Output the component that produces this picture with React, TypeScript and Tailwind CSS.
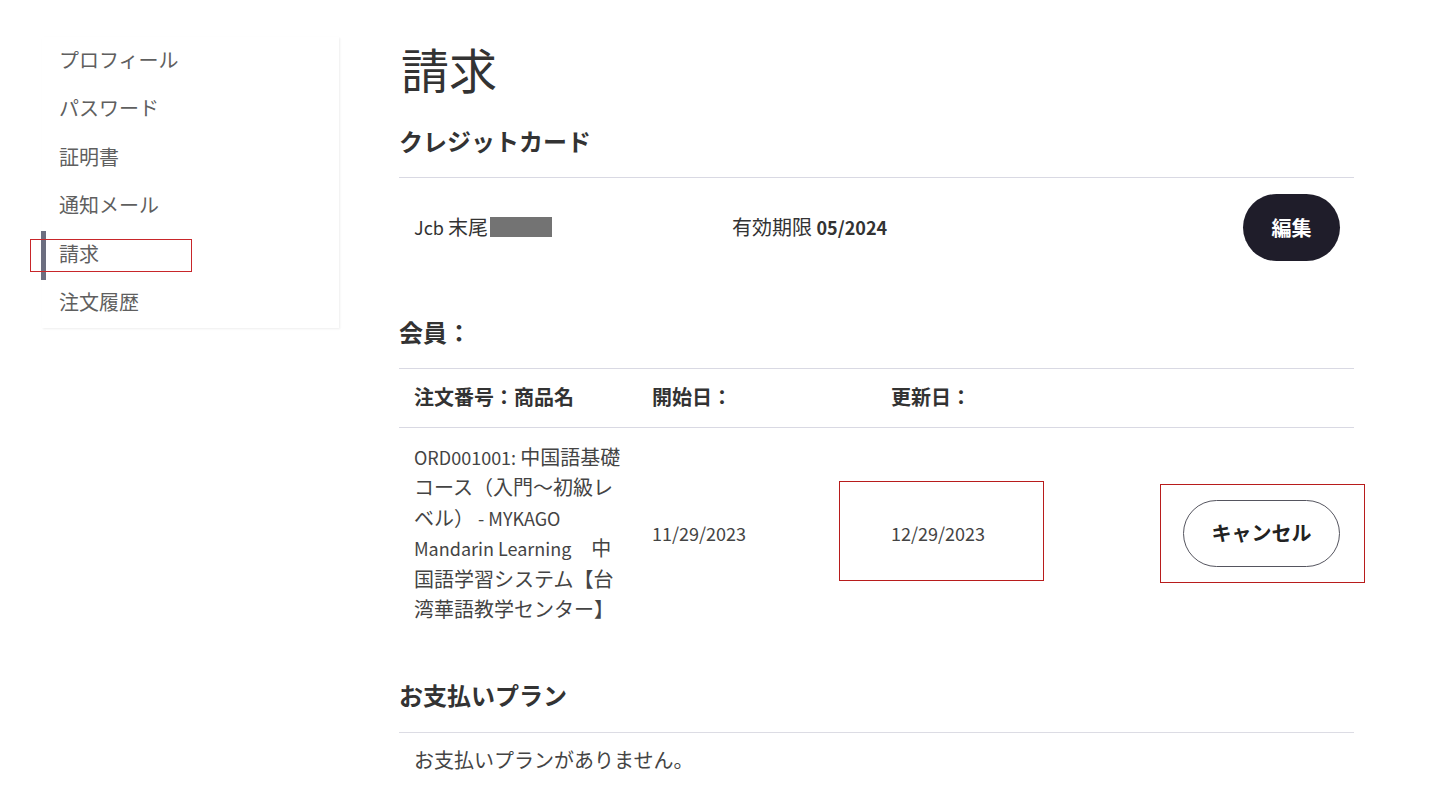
import React from "react";

const font = { fontFamily: '"Noto Sans CJK JP", "Noto Sans", sans-serif' };

const navItems = ["プロフィール", "パスワード", "証明書", "通知メール", "請求", "注文履歴"];

function L({ children }: { children: React.ReactNode }) {
  return <span className="text-[18px]">{children}</span>;
}

export default function App() {
  return (
    <div
      className="min-h-[810px] w-[1440px] bg-white pt-[37px] pl-[42px] flex items-start gap-[60px] text-[#333]"
      style={font}
    >
      {/* Sidebar */}
      <aside className="relative w-[297px] bg-white shadow-[1px_1px_2px_rgba(0,0,0,0.07)]">
        {navItems.map((item) => {
          const active = item === "請求";
          return (
            <div key={item} className="relative h-[48.5px] flex items-center pl-[17px] pb-[3px]">
              {active && <div className="absolute left-[-1px] top-0 h-full w-[5px] bg-[#6c6e80]" />}
              <span className="text-[20px] leading-none text-[#5f5f5f]">{item}</span>
            </div>
          );
        })}
        <div className="absolute left-[-12px] top-[202px] w-[162px] h-[33px] border border-[#c8262a]" />
      </aside>

      {/* Main */}
      <main className="w-[955px]">
        <h1 className="text-[48px] leading-[63px] font-normal text-[#333] pl-[2px]">請求</h1>

        <h2 className="mt-[24px] text-[24px] leading-[33px] font-bold text-[#333] pb-[20px] border-b border-[#d9d9e3]">
          クレジットカード
        </h2>
        <div className="flex items-center py-[16px] pl-[15px] pr-[14px]">
          <div className="w-[318px] flex items-center text-[20px] text-[#333] -translate-y-[1px]">
            <span>
              <L>Jcb </L>末尾
            </span>
            <span className="ml-[2px] inline-block w-[62px] h-[20px] bg-[#737373]" />
          </div>
          <div className="flex-1 text-[20px] text-[#333] -translate-y-[1px]">
            有効期限 <span className="font-bold text-[18px]">05/2024</span>
          </div>
          <button className="w-[97px] h-[67px] rounded-full bg-[#1f1d2a] text-white text-[20px] font-bold">
            編集
          </button>
        </div>

        <h2 className="mt-[40px] text-[24px] leading-[30px] font-bold text-[#333] pb-[21px] border-b border-[#d9d9e3]">
          会員：
        </h2>
        <div className="grid grid-cols-[238px_239px_1fr_auto] h-[59px] items-center border-b border-[#d9d9e3] text-[20px] font-bold text-[#333]">
          <div className="pl-[15px] -translate-y-[1px]">注文番号：商品名</div>
          <div className="pl-[15px] -translate-y-[1px]">開始日：</div>
          <div className="pl-[15px] -translate-y-[1px]">更新日：</div>
          <div />
        </div>
        <div className="relative grid grid-cols-[238px_239px_1fr_auto] items-center py-[14px] text-[20px] text-[#444]">
          <div className="pl-[15px] pr-[11px] leading-[30.4px]">
            <L>ORD001001: </L>中国語基礎コース（入門～初級レベル）<L> - MYKAGO Mandarin Learning</L>　中国語学習システム【台湾華語教学センター】
          </div>
          <div className="pl-[15px]">
            <L>11/29/2023</L>
          </div>
          <div className="pl-[15px]">
            <L>12/29/2023</L>
          </div>
          <div className="pr-[14px]">
            <button className="w-[157px] h-[67px] rounded-full border-[1.5px] border-[#55555f] bg-white text-[20px] font-bold text-[#222]">
              キャンセル
            </button>
          </div>
          <div className="absolute left-[440px] top-[53px] w-[205px] h-[100px] border border-[#b81c1c]" />
          <div className="absolute left-[761px] top-[56px] w-[205px] h-[99px] border border-[#b81c1c]" />
        </div>

        <h2 className="mt-[40px] text-[24px] leading-[33px] font-bold text-[#333] pb-[21px] border-b border-[#dcdce4]">
          お支払いプラン
        </h2>
        <p className="pt-[15px] pl-[15px] text-[20px] leading-[24px] text-[#444]">お支払いプランがありません。</p>
      </main>
    </div>
  );
}
